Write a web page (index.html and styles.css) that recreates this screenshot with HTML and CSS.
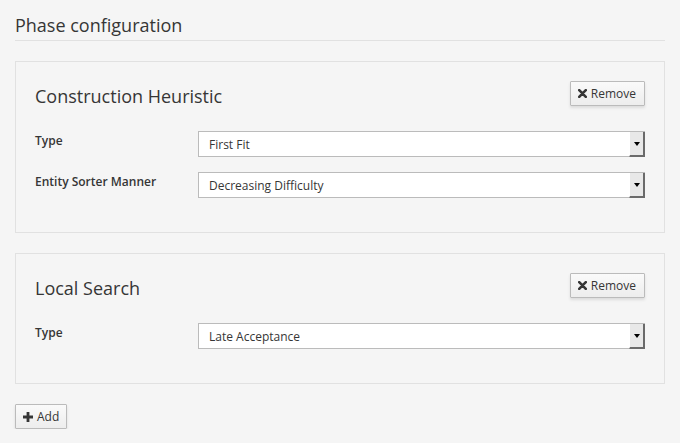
FILE: index.html
```html
<!DOCTYPE html>
<html>
<head>
<meta charset="utf-8">
<link rel="stylesheet" href="styles.css">
</head>
<body>
<div class="page">
  <h2 class="title">Phase configuration</h2>

  <div class="panel">
    <div class="panel-head">
      <h3 class="panel-title">Construction Heuristic</h3>
      <button class="btn"><svg class="ico" width="9" height="9" viewBox="0 0 9 9"><path d="M1.2 1.2L7.8 7.8M7.8 1.2L1.2 7.8" stroke="#363636" stroke-width="2.6" stroke-linecap="round"/></svg>Remove</button>
    </div>
    <div class="row">
      <label class="lbl">Type</label>
      <div class="sel"><span>First Fit</span></div>
    </div>
    <div class="row">
      <label class="lbl">Entity Sorter Manner</label>
      <div class="sel"><span>Decreasing Difficulty</span></div>
    </div>
  </div>

  <div class="panel">
    <div class="panel-head">
      <h3 class="panel-title">Local Search</h3>
      <button class="btn"><svg class="ico" width="9" height="9" viewBox="0 0 9 9"><path d="M1.2 1.2L7.8 7.8M7.8 1.2L1.2 7.8" stroke="#363636" stroke-width="2.6" stroke-linecap="round"/></svg>Remove</button>
    </div>
    <div class="row">
      <label class="lbl">Type</label>
      <div class="sel"><span>Late Acceptance</span></div>
    </div>
  </div>

  <div class="actions">
    <button class="btn add"><svg class="ico" width="10" height="10" viewBox="0 0 10 10"><path d="M3.6 0h2.8v3.6H10v2.8H6.4V10H3.6V6.4H0V3.6h3.6z" fill="#363636"/></svg>Add</button>
  </div>
</div>
</body>
</html>
```

FILE: styles.css
```css
* { box-sizing: border-box; }
html, body { margin: 0; padding: 0; background: #f5f5f5; }
body {
  font-family: "Open Sans", "Liberation Sans", sans-serif;
  color: #363636;
}
.page {
  padding: 14px 15px 0 15px;
  display: flex;
  flex-direction: column;
}
.title {
  margin: 0;
  font-size: 18px;
  line-height: 22px;
  font-weight: 400;
  color: #363636;
  padding-bottom: 4px;
  border-bottom: 1px solid #e1e1e1;
  margin-bottom: 20px;
}
.panel {
  border: 1px solid #e1e1e1;
  background: #f5f5f5;
  padding: 19px 19px 34px 19px;
  margin-bottom: 20px;
  display: flex;
  flex-direction: column;
  gap: 15px;
}
.panel-head {
  display: flex;
  justify-content: space-between;
  align-items: center;
  height: 25px;
  margin-bottom: 10px;
}
.panel-title {
  margin: 0;
  font-size: 18px;
  font-weight: 400;
  line-height: 22px;
  padding-top: 4px;
  color: #363636;
}
.btn {
  font-family: "Open Sans", "Liberation Sans", sans-serif;
  font-size: 12px;
  color: #363636;
  height: 25px;
  padding: 0 8px 0 7px;
  border: 1px solid #bbb;
  border-radius: 1px;
  background: linear-gradient(#fafafa, #ededed);
  box-shadow: 0 2px 3px rgba(0,0,0,0.1);
  display: inline-flex;
  align-items: center;
  gap: 4px;
  line-height: 1;
}
.ico { display: block; flex: none; }
.row {
  display: flex;
  align-items: flex-start;
  height: 26px;
}
.lbl {
  width: 163px;
  font-size: 12px;
  font-weight: 600;
  line-height: 16px;
  padding-top: 2px;
  color: #363636;
}
.sel {
  position: relative;
  flex: 1;
  height: 26px;
  background: #fff;
  border: 1px solid #bbb;
  font-size: 12px;
  line-height: 24px;
  padding-left: 10px;
  padding-top: 1px;
  color: #363636;
}
.sel::after {
  content: "";
  position: absolute;
  right: -1px;
  top: 0;
  bottom: -1px;
  width: 13px;
  background: #e8e8e8;
  border-left: 1px solid #fff;
  border-right: 2px solid #6a6a6a;
  border-bottom: 2px solid #6a6a6a;
}
.sel::before {
  content: "";
  position: absolute;
  right: 4px;
  top: 10px;
  width: 0; height: 0;
  border-left: 3px solid transparent;
  border-right: 3px solid transparent;
  border-top: 4px solid #000;
  z-index: 1;
}
.actions { display: flex; }
.add { padding: 0 7px 0 7px; gap: 4px; }
```
